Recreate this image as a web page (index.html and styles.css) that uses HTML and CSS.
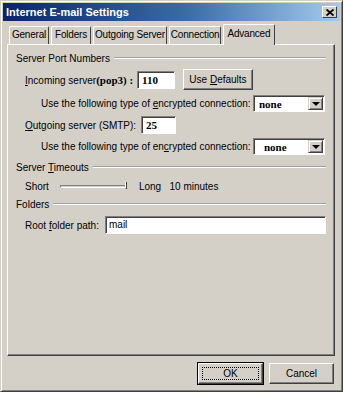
FILE: index.html
```html
<!DOCTYPE html>
<html lang="en">
<head>
    <meta charset="UTF-8">
    <title>Internet E-mail Settings</title>
    <link rel="stylesheet" href="styles.css">
</head>
<body>
    <div class="window">
        <div class="titlebar">
            <span class="title">Internet E-mail Settings</span>
            <span class="close">
                <svg width="8" height="7" viewBox="0 0 8 7">
                    <path d="M0.5 0.5 L7.5 6.5 M7.5 0.5 L0.5 6.5" stroke="#000" stroke-width="1.8"/>
                </svg>
            </span>
        </div>

        <div class="tabs">
            <span class="tab">General</span>
            <span class="tab">Folders</span>
            <span class="tab">Outgoing Server</span>
            <span class="tab">Connection</span>
            <span class="tab active">Advanced</span>
        </div>

        <div class="panel">
            <div class="group"><span>Server Port Numbers</span></div>

            <div class="row first">
                <label class="lbl lbl-in"><u>I</u>ncoming server<b class="serif">(pop3) :</b></label>
                <div class="field small serif-val">110</div>
                <div class="btn defaults"><span>Use <u>D</u>efaults</span></div>
            </div>
            <div class="row enc">
                <label class="lbl sub">Use the following type of <u>e</u>ncrypted connection:</label>
                <div class="combo"><span class="serif-val">none</span><span class="arrow"></span></div>
            </div>
            <div class="row outgoing">
                <label class="lbl lbl-out"><u>O</u>utgoing server (SMTP):</label>
                <div class="field tiny serif-val">25</div>
            </div>
            <div class="row enc second">
                <label class="lbl sub">Use the following type of en<u>c</u>rypted connection:</label>
                <div class="combo"><span class="serif-val pad">none</span><span class="arrow"></span></div>
            </div>

            <div class="group timeouts"><span>Server <u>T</u>imeouts</span></div>
            <div class="row timeout">
                <label class="lbl">Short</label>
                <div class="slider"><span class="thumb"></span></div>
                <label class="lbl">Long&nbsp;&nbsp;&nbsp;10 minutes</label>
            </div>

            <div class="group folders"><span>Folders</span></div>
            <div class="row folder">
                <label class="lbl">Root <u>f</u>older path:</label>
                <div class="field wide">mail</div>
            </div>
        </div>

        <div class="footer">
            <div class="btn ok"><span class="focus">OK</span></div>
            <div class="btn">Cancel</div>
        </div>
    </div>
</body>
</html>
```

FILE: styles.css
```css
* {
    box-sizing: border-box;
}
body {
    margin: 0;
    background-color: #ffffff;
    font-family: "Liberation Sans", Tahoma, sans-serif;
    font-size: 10px;
    color: #000;
}
.window {
    width: 343px;
    height: 392px;
    background-color: #d4d0c8;
    border-top: 1px solid #d4d0c8;
    border-left: 1px solid #d4d0c8;
    border-right: 1px solid #404040;
    border-bottom: 1px solid #404040;
    box-shadow: inset 1px 1px 0 #ffffff, inset -1px -1px 0 #808080;
    padding: 2px;
    display: flex;
    flex-direction: column;
}
.titlebar {
    height: 18px;
    background: linear-gradient(to right, #0a246a, #3a6ea5 55%, #a6caf0);
    display: flex;
    align-items: center;
    justify-content: space-between;
    padding: 0 3px 0 3px;
}
.title {
    color: #ffffff;
    font-weight: bold;
    font-size: 11px;
}
.close {
    width: 15px;
    height: 12px;
    background-color: #d4d0c8;
    border-top: 1px solid #ffffff;
    border-left: 1px solid #ffffff;
    border-right: 1px solid #404040;
    border-bottom: 1px solid #404040;
    display: flex;
    align-items: center;
    justify-content: center;
}
.tabs {
    display: flex;
    align-items: flex-end;
    height: 21px;
    margin-top: 2px;
    padding-left: 6px;
}
.tab {
    height: 18px;
    min-width: 40px;
    padding: 0 1px;
    line-height: 16px;
    text-align: center;
    letter-spacing: -0.2px;
    border-top: 1px solid #ffffff;
    border-left: 1px solid #ffffff;
    border-right: 1px solid #404040;
    border-radius: 2px 2px 0 0;
    margin-right: 2px;
    white-space: nowrap;
}
.tab.active {
    height: 21px;
    padding: 0 4px 0 3px;
    line-height: 17px;
    margin-bottom: -1px;
    position: relative;
    background-color: #d4d0c8;
}
.panel {
    height: 312px;
    margin: 0 5px 0 4px;
    border-top: 1px solid #ffffff;
    border-left: 1px solid #ffffff;
    border-right: 1px solid #404040;
    border-bottom: 1px solid #404040;
    box-shadow: inset -1px -1px 0 #808080;
    padding: 4px 8px 0 8px;
}
.group {
    display: flex;
    align-items: center;
    gap: 4px;
    height: 18px;
}
.group::after {
    content: "";
    flex: 1;
    border-top: 1px solid #a0a0a0;
    border-bottom: 1px solid #ffffff;
}
.group.timeouts {
    margin-top: 3px;
}
.row {
    display: flex;
    align-items: center;
    height: 18px;
    padding-left: 9px;
}
.row.first {
    margin-top: 4px;
}
.row.enc {
    margin-top: 5px;
    padding-left: 0;
}
.row.outgoing {
    margin-top: 4px;
}
.row.enc.second {
    margin-top: 3px;
}
.row.timeout {
    margin-top: 1px;
}
.row.folder {
    margin-top: 3px;
}
.lbl {
    white-space: nowrap;
}
.lbl.sub {
    width: 237px;
    padding-left: 25px;
}
.lbl-in {
    width: 112px;
}
.lbl-out {
    width: 116px;
}
.row.folder .lbl {
    width: 80px;
}
.serif {
    font-family: "Liberation Serif", serif;
    font-size: 11px;
}
.serif-val {
    font-family: "Liberation Serif", serif;
    font-weight: bold;
    font-size: 11px;
}
.field {
    height: 18px;
    background-color: #ffffff;
    border-top: 1px solid #808080;
    border-left: 1px solid #808080;
    border-right: 1px solid #ffffff;
    border-bottom: 1px solid #ffffff;
    box-shadow: inset 1px 1px 0 #404040;
    padding: 0 4px;
    line-height: 16px;
}
.field.small {
    width: 38px;
}
.field.tiny {
    width: 35px;
}
.field.wide {
    width: 221px;
    padding-left: 3px;
}
.btn {
    height: 21px;
    background-color: #d4d0c8;
    border-top: 1px solid #ffffff;
    border-left: 1px solid #ffffff;
    border-right: 1px solid #404040;
    border-bottom: 1px solid #404040;
    box-shadow: inset -1px -1px 0 #808080;
    display: flex;
    align-items: center;
    justify-content: center;
}
.btn.defaults {
    width: 70px;
    margin-left: 8px;
    margin-top: -2px;
}
.combo {
    width: 72px;
    height: 17px;
    background-color: #ffffff;
    border-top: 1px solid #808080;
    border-left: 1px solid #808080;
    border-right: 1px solid #ffffff;
    border-bottom: 1px solid #ffffff;
    box-shadow: inset 1px 1px 0 #404040;
    display: flex;
    align-items: center;
    justify-content: space-between;
    padding: 1px 1px 0 5px;
}
.combo .pad {
    padding-left: 5px;
}
.arrow {
    width: 15px;
    height: 13px;
    background-color: #d4d0c8;
    border-top: 1px solid #d4d0c8;
    border-left: 1px solid #d4d0c8;
    border-right: 1px solid #404040;
    border-bottom: 1px solid #404040;
    box-shadow: inset 1px 1px 0 #ffffff, inset -1px -1px 0 #808080;
    display: flex;
    align-items: center;
    justify-content: center;
}
.arrow::after {
    content: "";
    border-left: 4px solid transparent;
    border-right: 4px solid transparent;
    border-top: 4px solid #000;
}
.slider {
    width: 67px;
    height: 3px;
    margin: 0 12px 0 11px;
    border-top: 1px solid #808080;
    border-left: 1px solid #808080;
    border-bottom: 1px solid #ffffff;
    border-right: 1px solid #ffffff;
    position: relative;
}
.thumb {
    position: absolute;
    right: -1px;
    top: -4px;
    width: 2px;
    height: 7px;
    border-right: 1px solid #404040;
    border-bottom: 1px solid #404040;
    border-left: 1px solid #ffffff;
}
.footer {
    display: flex;
    justify-content: flex-end;
    gap: 6px;
    padding: 7px 6px 0 0;
}
.footer .btn {
    width: 65px;
    height: 21px;
}
.btn.ok {
    outline: 1px solid #000;
}
.focus {
    flex: 1;
    margin: 0 3px;
    height: 13px;
    border: 1px dotted #000;
    text-align: center;
    line-height: 11px;
}
```
